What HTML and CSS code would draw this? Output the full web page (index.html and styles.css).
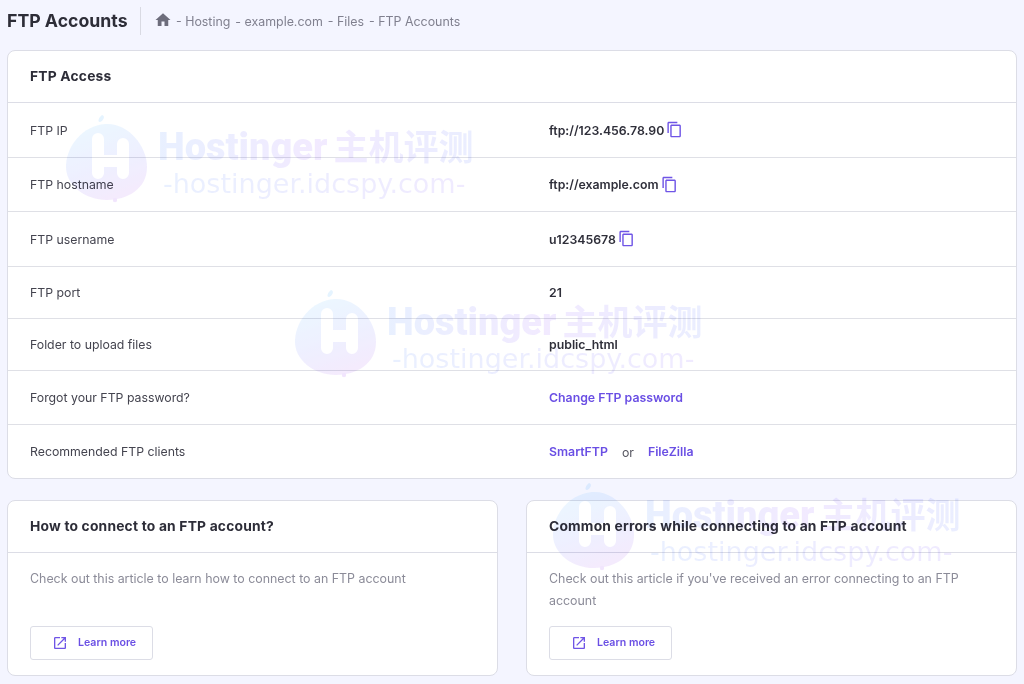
FILE: index.html
```html
<!DOCTYPE html>
<html lang="en">
<head>
<meta charset="utf-8">
<title>FTP Accounts</title>
<link rel="stylesheet" href="styles.css">
</head>
<body>
<svg class="defs" width="0" height="0" aria-hidden="true">
  <defs>
    <linearGradient id="blob" x1="0.3" y1="0" x2="0.7" y2="1">
      <stop offset="0" stop-color="#dff2ff"/>
      <stop offset="0.5" stop-color="#e2e6ff"/>
      <stop offset="1" stop-color="#eedcfb"/>
    </linearGradient>
    <symbol id="i-copy" viewBox="0 0 24 24"><path d="M16 1H4c-1.1 0-2 .9-2 2v14h2V3h12V1zm3 4H8c-1.1 0-2 .9-2 2v14c0 1.1.9 2 2 2h11c1.1 0 2-.9 2-2V7c0-1.1-.9-2-2-2zm0 16H8V7h11v14z"/></symbol>
    <symbol id="i-open" viewBox="0 0 24 24"><path d="M19 19H5V5h7V3H5c-1.11 0-2 .9-2 2v14c0 1.1.89 2 2 2h14c1.1 0 2-.9 2-2v-7h-2v7zM14 3v2h3.59l-9.83 9.83 1.41 1.41L19 6.41V10h2V3h-7z"/></symbol>
    <symbol id="i-logo" viewBox="0 0 82 88">
      <path d="M40 9C62 7 82 30 82 52C82 74 62 85 42 85C20 85 0 70 1 50C2 30 18 11 40 9Z" fill="url(#blob)"/>
      <path d="M37 0C41 1 38 6 35 7C32 7 34 2 37 0Z" fill="#d4ecff"/>
      <circle cx="50" cy="85" r="2.2" fill="#e8d4fb"/>
      <path d="M33 24V58M58 29V58M33 46H58" fill="none" stroke="#fff" stroke-width="12" stroke-linecap="round"/>
    </symbol>
  </defs>
</svg>

<div class="page">
  <header class="topbar">
    <h1 class="page-title">FTP Accounts</h1>
    <nav class="crumbs">
      <svg class="home-icon" viewBox="0 0 24 24"><path d="M10 20v-6h4v6h5v-8h3L12 3 2 12h3v8z"/></svg>
      <span class="crumb">- Hosting</span>
      <span class="crumb">- example.com</span>
      <span class="crumb">- Files</span>
      <span class="crumb">- FTP Accounts</span>
    </nav>
  </header>

  <section class="card">
    <h2 class="card-head">FTP Access</h2>
    <div class="row row-tall">
      <span class="label">FTP IP</span>
      <span class="value">ftp://123.456.78.90<svg class="copy-icon"><use href="#i-copy"/></svg></span>
    </div>
    <div class="row row-mid">
      <span class="label">FTP hostname</span>
      <span class="value">ftp://example.com<svg class="copy-icon"><use href="#i-copy"/></svg></span>
    </div>
    <div class="row row-tall">
      <span class="label">FTP username</span>
      <span class="value">u12345678<svg class="copy-icon"><use href="#i-copy"/></svg></span>
    </div>
    <div class="row row-short">
      <span class="label">FTP port</span>
      <span class="value">21</span>
    </div>
    <div class="row row-short">
      <span class="label">Folder to upload files</span>
      <span class="value">public_html</span>
    </div>
    <div class="row row-mid">
      <span class="label">Forgot your FTP password?</span>
      <span class="value"><a class="link" href="#">Change FTP password</a></span>
    </div>
    <div class="row row-last">
      <span class="label">Recommended FTP clients</span>
      <span class="value"><a class="link" href="#">SmartFTP</a><span class="or">or</span><a class="link" href="#">FileZilla</a></span>
    </div>
  </section>

  <div class="columns">
    <section class="card help-card">
      <h2 class="card-head">How to connect to an FTP account?</h2>
      <div class="help-body">
        <p class="help-text">Check out this article to learn how to connect to an FTP account</p>
        <a class="button" href="#"><svg class="open-icon"><use href="#i-open"/></svg>Learn more</a>
      </div>
    </section>
    <section class="card help-card">
      <h2 class="card-head">Common errors while connecting to an FTP account</h2>
      <div class="help-body">
        <p class="help-text">Check out this article if you've received an error connecting to an FTP account</p>
        <a class="button" href="#"><svg class="open-icon"><use href="#i-open"/></svg>Learn more</a>
      </div>
    </section>
  </div>
</div>

<div class="watermark wm-1">
  <svg class="wm-logo"><use href="#i-logo"/></svg>
  <div class="wm-text"><div class="wm-name"><span class="wm-latin">Hostinger</span>主机评测</div><div class="wm-url">-hostinger.idcspy.com-</div></div>
</div>
<div class="watermark wm-2">
  <svg class="wm-logo"><use href="#i-logo"/></svg>
  <div class="wm-text"><div class="wm-name"><span class="wm-latin">Hostinger</span>主机评测</div><div class="wm-url">-hostinger.idcspy.com-</div></div>
</div>
<div class="watermark wm-3">
  <svg class="wm-logo"><use href="#i-logo"/></svg>
  <div class="wm-text"><div class="wm-name"><span class="wm-latin">Hostinger</span>主机评测</div><div class="wm-url">-hostinger.idcspy.com-</div></div>
</div>
</body>
</html>
```
FILE: styles.css
```css
* { box-sizing: border-box; }
html, body { margin: 0; height: 684px; overflow: hidden; }
body {
  background: #f4f5ff;
  color: #2f2f3a;
  font-family: Inter, "Noto Sans CJK SC", sans-serif;
  position: relative;
}
.defs { position: absolute; }
.page { padding: 7px 7px 0; }

.topbar { display: flex; align-items: center; height: 28px; margin-bottom: 15px; }
.page-title {
  margin: 0;
  padding-right: 12px;
  border-right: 1px solid #d9dae3;
  height: 28px;
  line-height: 28px;
  font-size: 17.7px;
  font-weight: 700;
  color: #2d2d38;
  width: 134px;
  white-space: nowrap;
}
.crumbs { display: flex; align-items: center; padding-left: 13px; font-size: 12.4px; color: #80808f; }
.home-icon { width: 18px; height: 18px; fill: #6d6d7c; margin: -2px 4px 0 0; }
.crumb { margin-right: 5px; white-space: nowrap; }

.card {
  background: #fff;
  border: 1px solid #dcdde6;
  border-radius: 8px;
}
.card-head {
  margin: 0;
  height: 52px;
  padding: 0 0 2px 22px;
  display: flex;
  align-items: center;
  border-bottom: 1px solid #dcdde6;
  font-size: 13.8px;
  letter-spacing: .2px;
  font-weight: 700;
  color: #2d2d38;
}

.row {
  display: grid;
  grid-template-columns: 519px 1fr;
  align-items: center;
  padding-left: 22px;
  border-bottom: 1px solid #dfe0e6;
  font-size: 12.3px;
}
.row-tall { height: 55px; }
.row-mid { height: 54px; }
.row-short { height: 52px; }
.row-last { height: 53px; border-bottom: 0; }
.label { color: #44444f; }
.value { display: flex; align-items: center; font-weight: 600; color: #2f2f3a; }
.copy-icon { width: 17px; height: 17px; fill: #6f55e6; margin: -1px 0 0 2px; }
.link { color: #6a4fe4; font-weight: 600; text-decoration: none; white-space: nowrap; }
.or { margin: 1px 14px 0 14px; font-weight: 400; color: #55555f; }

.columns { display: grid; grid-template-columns: 491px 491px; column-gap: 28px; margin-top: 21px; }
.help-card { height: 176px; }
.help-body { padding: 15px 22px 0; }
.help-text {
  margin: 0;
  height: 58px;
  font-size: 12.4px;
  line-height: 22px;
  color: #8b8b98;
}
.button {
  display: flex;
  align-items: center;
  width: 123px;
  height: 34px;
  padding: 0 0 1px 21px;
  border: 1px solid #dcdde6;
  border-radius: 3px;
  font-size: 10.6px;
  font-weight: 600;
  color: #6a4fe4;
  text-decoration: none;
}
.open-icon { width: 16px; height: 16px; fill: #6f55e6; margin-right: 10px; }

.watermark {
  position: absolute;
  display: flex;
  width: 420px;
  pointer-events: none;
  opacity: .6;
  mix-blend-mode: multiply;
}
.wm-1 { left: 65px; top: 115px; }
.wm-2 { left: 294px; top: 290px; }
.wm-3 { left: 552px; top: 483px; }
.wm-logo { width: 82px; height: 88px; flex: none; }
.wm-text { margin-left: 11px; padding-top: 13px; }
.wm-name {
  font-family: Roboto, "Noto Sans CJK SC", sans-serif;
  font-size: 35px;
  line-height: 38px;
  font-weight: 700;
  white-space: nowrap;
  background: linear-gradient(90deg, #d9e6ff, #e9dcff 50%, #dce2ff);
  -webkit-background-clip: text;
  background-clip: text;
  color: transparent;
}
.wm-latin { font-size: 38px; font-weight: 900; margin-right: 6px; }
.wm-url {
  margin-left: 5px;
  font-family: "DejaVu Sans", sans-serif;
  font-size: 27px;
  line-height: 32px;
  white-space: nowrap;
  background: linear-gradient(90deg, #dbe6ff, #e6dcff);
  -webkit-background-clip: text;
  background-clip: text;
  color: transparent;
}
```
